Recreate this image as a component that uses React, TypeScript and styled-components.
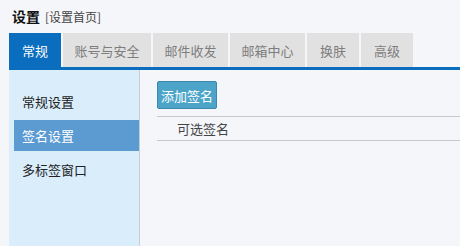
import React from "react";
import styled, { createGlobalStyle } from "styled-components";

const Global = createGlobalStyle`
  html, body { margin: 0; padding: 0; background: #f5f6fa; }
  body { font-family: "Noto Sans CJK SC", "Liberation Sans", sans-serif; color: #333; overflow: hidden; }
`;

const Page = styled.div`
  width: 460px;
  height: 246px;
  padding-left: 9px;
  box-sizing: border-box;
  display: flex;
  flex-direction: column;
`;

const Header = styled.div`
  height: 33px;
  display: flex;
  align-items: center;
  padding-left: 3px;
  padding-bottom: 1px;
  box-sizing: border-box;
`;

const Title = styled.span`
  font-size: 14px;
  font-weight: bold;
  color: #111;
`;

const Crumb = styled.span`
  font-size: 12px;
  color: #444;
  margin-left: 5px;
`;

const TabBar = styled.div`
  display: flex;
  gap: 2px;
  height: 34px;
  border-bottom: 3px solid #0a6dbd;
`;

const Tab = styled.div<{ $active?: boolean }>`
  min-width: 52px;
  padding: 0 11.5px;
  box-sizing: border-box;
  display: flex;
  align-items: center;
  justify-content: center;
  font-size: 13px;
  background: ${(p) => (p.$active ? "#0a6dbd" : "#e1e1e1")};
  color: ${(p) => (p.$active ? "#fff" : "#7d7d7d")};
`;

const Body = styled.div`
  flex: 1;
  display: flex;
`;

const Sidebar = styled.div`
  width: 131px;
  background: #d9edfb;
  border-right: 1px solid #c4cfd8;
  padding: 16px 0 0 5px;
  box-sizing: border-box;
  display: flex;
  flex-direction: column;
  gap: 3px;
`;

const NavItem = styled.div<{ $active?: boolean }>`
  height: 31px;
  padding-left: 8px;
  display: flex;
  align-items: center;
  font-size: 13px;
  background: ${(p) => (p.$active ? "#5b9bd2" : "transparent")};
  color: ${(p) => (p.$active ? "#fff" : "#222")};
`;

const Main = styled.div`
  flex: 1;
  padding: 11px 0 0 17px;
  display: flex;
  flex-direction: column;
  align-items: flex-start;
`;

const Button = styled.button`
  height: 28px;
  padding: 0 3px;
  font-family: inherit;
  font-size: 13px;
  color: #fff;
  background: #4ca5c9;
  border: 1px solid #3a88aa;
  border-radius: 2px;
  margin-bottom: 7px;
`;

const Table = styled.div`
  align-self: stretch;
  border-top: 1px solid #c8c8c8;
  border-bottom: 1px solid #c8c8c8;
`;

const HeadCell = styled.div`
  height: 23px;
  display: flex;
  align-items: center;
  padding-left: 20px;
  font-size: 13px;
  color: #444;
`;

export default function App() {
  const tabs = ["常规", "账号与安全", "邮件收发", "邮箱中心", "换肤", "高级"];
  const nav = ["常规设置", "签名设置", "多标签窗口"];
  return (
    <>
      <Global />
      <Page>
        <Header>
          <Title>设置</Title>
          <Crumb>[设置首页]</Crumb>
        </Header>
        <TabBar>
          {tabs.map((t, i) => (
            <Tab key={t} $active={i === 0}>{t}</Tab>
          ))}
        </TabBar>
        <Body>
          <Sidebar>
            {nav.map((n, i) => (
              <NavItem key={n} $active={i === 1}>{n}</NavItem>
            ))}
          </Sidebar>
          <Main>
            <Button>添加签名</Button>
            <Table>
              <HeadCell>可选签名</HeadCell>
            </Table>
          </Main>
        </Body>
      </Page>
    </>
  );
}
